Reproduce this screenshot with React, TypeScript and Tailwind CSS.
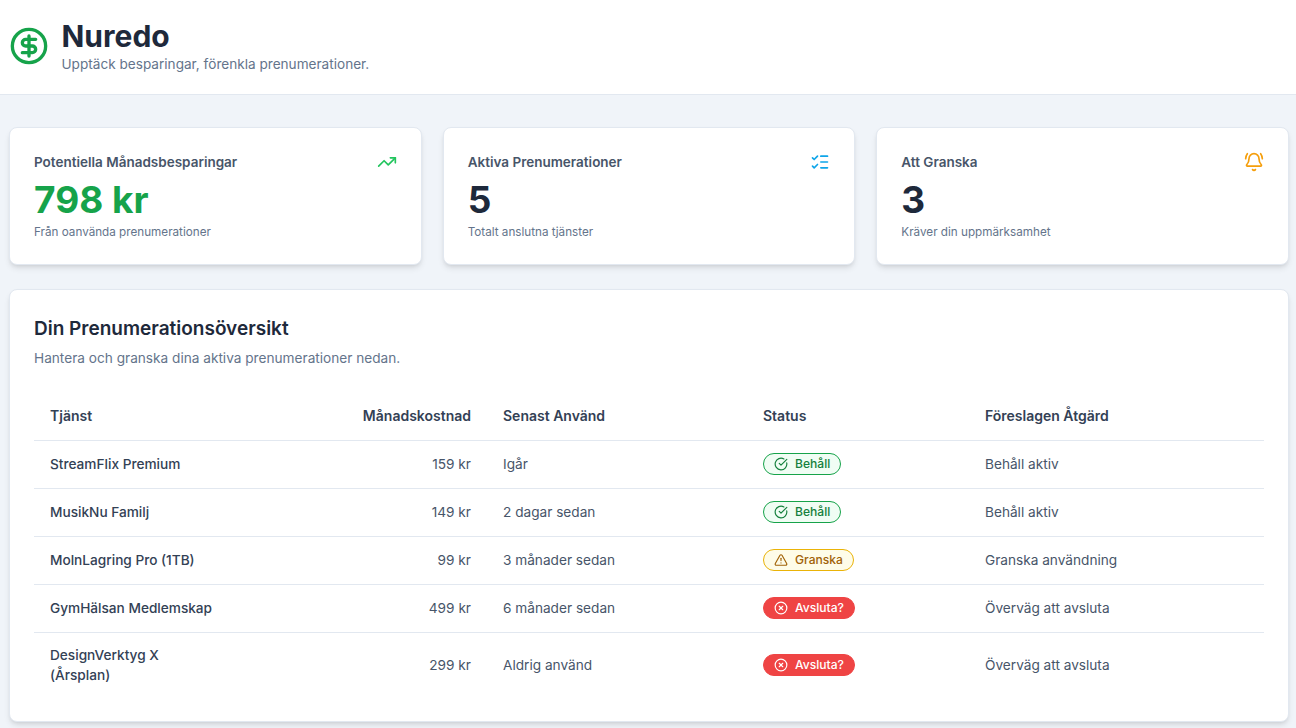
import { BellRing, CircleCheckBig, CircleDollarSign, CircleX, ListChecks, TrendingUp, TriangleAlert } from 'lucide-react';

const rows = [
  { name: 'StreamFlix Premium', cost: '159 kr', used: 'Igår', status: 'keep', action: 'Behåll aktiv' },
  { name: 'MusikNu Familj', cost: '149 kr', used: '2 dagar sedan', status: 'keep', action: 'Behåll aktiv' },
  { name: 'MolnLagring Pro (1TB)', cost: '99 kr', used: '3 månader sedan', status: 'review', action: 'Granska användning' },
  { name: 'GymHälsan Medlemskap', cost: '499 kr', used: '6 månader sedan', status: 'cancel', action: 'Överväg att avsluta' },
  { name: 'DesignVerktyg X (Årsplan)', cost: '299 kr', used: 'Aldrig använd', status: 'cancel', action: 'Överväg att avsluta' },
];

const StatusBadge = ({ status }: { status: string }) => {
  if (status === 'keep') {
    return (
      <span className="inline-flex items-center gap-[7px] rounded-full border border-[#16a34a] bg-[#f0fdf4] px-[10px] h-[22px] align-middle text-[12.1px] font-medium text-[#15803d]">
        <CircleCheckBig size={14} strokeWidth={2} />
        Behåll
      </span>
    );
  }
  if (status === 'review') {
    return (
      <span className="inline-flex items-center gap-[7px] rounded-full border border-[#eab308] bg-[#fefce8] px-[10px] h-[22px] align-middle text-[12.1px] font-medium text-[#a16207]">
        <TriangleAlert size={14} strokeWidth={2} />
        Granska
      </span>
    );
  }
  return (
    <span className="inline-flex items-center gap-[7px] rounded-full border border-[#ef4444] bg-[#ef4444] px-[10px] h-[22px] align-middle text-[12.1px] font-medium text-white">
      <CircleX size={14} strokeWidth={2} />
      Avsluta?
    </span>
  );
};

const StatCard = ({ title, value, note, valueColor, icon }: { title: string; value: string; note: string; valueColor: string; icon: React.ReactNode }) => (
  <div className="rounded-lg border border-[#e2e8f0] bg-white px-6 pt-6 h-[138px] shadow-md">
    <div className="flex items-center justify-between h-5">
      <span className="text-[13.5px] font-semibold text-[#475569]">{title}</span>
      {icon}
    </div>
    <div className={`mt-2 text-[37px] leading-[40px] font-bold ${valueColor}`}>{value}</div>
    <div className="mt-1 text-[11.7px] leading-4 text-[#64748b]">{note}</div>
  </div>
);

export default function App() {
  return (
    <div className="min-h-screen bg-[#f0f4f9] font-['Inter',sans-serif] text-[#1e293b]">
      {/* Header */}
      <header className="flex items-center gap-[13px] h-[95px] border-b border-[#e2e8f0] bg-white pl-[8.5px] pb-[3px]">
        <CircleDollarSign size={40} strokeWidth={2} className="text-[#16a34a]" />
        <div>
          <h1 className="text-3xl leading-9 font-bold text-[#1e293b]">Nuredo</h1>
          <p className="text-[13.6px] leading-5 text-[#64748b]">Upptäck besparingar, förenkla prenumerationer.</p>
        </div>
      </header>

      <main className="pl-[9px] pr-[7px] pt-8">
        {/* Stats */}
        <div className="grid grid-cols-3 gap-[21px]">
          <StatCard title="Potentiella Månadsbesparingar" value="798 kr" note="Från oanvända prenumerationer" valueColor="text-[#16a34a]" icon={<TrendingUp size={20} className="text-[#22c55e]" />} />
          <StatCard title="Aktiva Prenumerationer" value="5" note="Totalt anslutna tjänster" valueColor="text-[#1e293b]" icon={<ListChecks size={20} className="text-[#0ea5e9]" />} />
          <StatCard title="Att Granska" value="3" note="Kräver din uppmärksamhet" valueColor="text-[#1e293b]" icon={<BellRing size={20} className="text-[#f59e0b]" />} />
        </div>

        {/* Subscription table */}
        <section className="mt-6 rounded-lg border border-[#e2e8f0] bg-white px-6 pt-[25px] pb-6 shadow-md">
          <h2 className="text-[19px] leading-7 font-semibold text-[#1e293b]">Din Prenumerationsöversikt</h2>
          <p className="mt-[5px] text-[13.65px] leading-5 text-[#64748b]">Hantera och granska dina aktiva prenumerationer nedan.</p>
          <table className="mt-6 w-full table-fixed text-[13.65px]">
            <thead>
              <tr className="h-[48px] border-b border-[#e2e8f0] text-left text-[14px] text-[#334155]">
                <th className="w-[197px] pl-4 font-semibold">Tjänst</th>
                <th className="w-[256px] pr-4 text-right font-semibold">Månadskostnad</th>
                <th className="w-[260px] pl-4 font-semibold">Senast Använd</th>
                <th className="w-[222px] pl-4 font-semibold">Status</th>
                <th className="pl-4 font-semibold">Föreslagen Åtgärd</th>
              </tr>
            </thead>
            <tbody>
              {rows.map((row, i) => (
                <tr key={row.name} className={i === rows.length - 1 ? 'h-[65px]' : 'h-[48px] border-b border-[#e2e8f0]'}>
                  <td className="pl-4 pr-4 font-medium leading-5 text-[#334155]">{row.name}</td>
                  <td className="pr-4 text-right text-[#475569]">{row.cost}</td>
                  <td className="pl-4 text-[#475569]">{row.used}</td>
                  <td className="pl-4"><StatusBadge status={row.status} /></td>
                  <td className="pl-4 text-[#475569]">{row.action}</td>
                </tr>
              ))}
            </tbody>
          </table>
        </section>
      </main>
    </div>
  );
}
